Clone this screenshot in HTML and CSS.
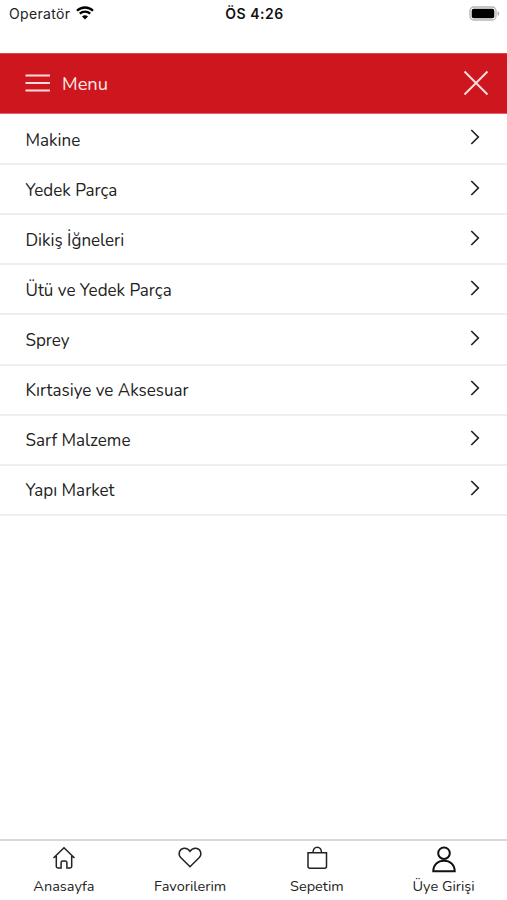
FILE: index.html
```
<!DOCTYPE html>
<html lang="tr">

<head>
    <meta charset="UTF-8">
    <meta name="viewport" content="width=device-width, initial-scale=1.0">
    <title>Menu</title>
    <link rel="stylesheet" href="styles.css">
</head>

<body>
    <div class="status-bar">
        <div class="carrier">
            <span>Operatör</span>
            <svg class="wifi" width="18" height="14" viewBox="0 0 18 14">
                <path d="M1 4.8C5.5.4 12.5.4 17 4.8M3.8 7.7c3-2.8 7.4-2.8 10.4 0" fill="none" stroke="#000" stroke-width="2.3"/>
                <path d="M9 13.6l-3-3.1c1.7-1.6 4.3-1.6 6 0z"/>
            </svg>
        </div>
        <div class="time">ÖS 4:26</div>
        <svg class="battery" width="31" height="15" viewBox="0 0 31 15">
            <rect x="1" y="1" width="26" height="13" rx="3.8" fill="#fff" stroke="#b5b5b5" stroke-width="1.3"/>
            <rect x="2.7" y="2.7" width="22.6" height="9.6" rx="2"/>
            <path d="M28.6 5.2c2.1.6 2.1 4 0 4.6z" fill="#aaa"/>
        </svg>
    </div>

    <header class="menu-header">
        <svg class="burger" width="26" height="18" viewBox="0 0 26 18">
            <path d="M.5 1.4h24.5M.5 9h24.5M.5 16.6h24.5"/>
        </svg>
        <h1>Menu</h1>
        <svg class="close" width="26" height="26" viewBox="0 0 26 26">
            <path d="M1.5 1.5l23 23M24.5 1.5l-23 23"/>
        </svg>
    </header>

    <ul class="menu-list">
        <li><span>Makine</span><svg width="10" height="16" viewBox="0 0 10 16"><path d="M1.3 1l7 7-7 7"/></svg></li>
        <li><span>Yedek Parça</span><svg width="10" height="16" viewBox="0 0 10 16"><path d="M1.3 1l7 7-7 7"/></svg></li>
        <li><span>Dikiş İğneleri</span><svg width="10" height="16" viewBox="0 0 10 16"><path d="M1.3 1l7 7-7 7"/></svg></li>
        <li><span>Ütü ve Yedek Parça</span><svg width="10" height="16" viewBox="0 0 10 16"><path d="M1.3 1l7 7-7 7"/></svg></li>
        <li><span>Sprey</span><svg width="10" height="16" viewBox="0 0 10 16"><path d="M1.3 1l7 7-7 7"/></svg></li>
        <li><span>Kırtasiye ve Aksesuar</span><svg width="10" height="16" viewBox="0 0 10 16"><path d="M1.3 1l7 7-7 7"/></svg></li>
        <li><span>Sarf Malzeme</span><svg width="10" height="16" viewBox="0 0 10 16"><path d="M1.3 1l7 7-7 7"/></svg></li>
        <li><span>Yapı Market</span><svg width="10" height="16" viewBox="0 0 10 16"><path d="M1.3 1l7 7-7 7"/></svg></li>
    </ul>

    <nav class="tab-bar">
        <a class="tab">
            <svg width="24" height="24" viewBox="0 0 24 24">
                <path d="M1.5 12L12 1.7 22.5 12M4.3 10v10.2a1.8 1.8 0 0 0 1.800 1.800h3v-5.500a1.500 1.500 0 0 1 1.500-1.500h2.800a1.500 1.500 0 0 1 1.500 1.500V22h3a1.800 1.800 0 0 0 1.800-1.800V10"/>
            </svg>
            <span>Anasayfa</span>
        </a>
        <a class="tab">
            <svg width="24" height="24" viewBox="0 0 24 24">
                <path d="M12 20.7L2.7 11.5C-.3 8 1.3 2.700 6 2.200c2.600-.2 4.800 1.200 6 3.200 1.200-2 3.400-3.400 6-3.200 4.700.5 6.300 5.800 3.300 9.300z"/>
            </svg>
            <span>Favorilerim</span>
        </a>
        <a class="tab">
            <svg width="24" height="24" viewBox="0 0 24 24">
                <path d="M3 6.8h18.500v13.400a2 2 0 0 1-2 2H5a2 2 0 0 1-2-2zM8 6.800c0-7.500 8.500-7.500 8.500 0"/>
            </svg>
            <span>Sepetim</span>
        </a>
        <a class="tab user">
            <svg width="24" height="26" viewBox="0 0 24 26">
                <circle cx="12" cy="7.2" r="5.8"/>
                <path d="M1.3 25.300C1.300 18.400 6 14.800 12 14.800S22.700 18.400 22.700 25.300z"/>
            </svg>
            <span>Üye Girişi</span>
        </a>
    </nav>
</body>

</html>
```
FILE: styles.css
```
* {
    box-sizing: border-box;
}

body {
    margin: 0;
    height: 900px;
    display: flex;
    flex-direction: column;
    background-color: #fff;
    color: #222;
    font-family: Nunito, Lato, sans-serif;
    overflow: hidden;
}

svg {
    flex: none;
}

/* phone status bar */
.status-bar {
    display: grid;
    grid-template-columns: 1fr auto 1fr;
    align-items: start;
    height: 53px;
    padding: 5px 7px 0 9px;
    font-family: Inter, sans-serif;
    font-size: 14px;
    line-height: 18px;
}

.carrier {
    display: flex;
    gap: 6px;
    letter-spacing: 0.32px;
}

.wifi {
    margin-top: 1px;
}

.time {
    color: #111;
    font-weight: 600;
    letter-spacing: 0.5px;
}

.battery {
    justify-self: end;
    margin-top: 1px;
}

/* red title bar */
.menu-header {
    display: flex;
    align-items: center;
    height: 61px;
    padding: 0 18px 0 25px;
    background-color: #ce161e;
    border-top: 1px solid #d9484f;
    border-bottom: 1px solid #df6268;
    color: #ffe9ea;
}

.menu-header h1 {
    flex: 1;
    margin: 0 0 0 11px;
    font-size: 18.3px;
    font-weight: 400;
    line-height: 24px;
}

.menu-header svg {
    margin-top: -1px;
    fill: none;
    stroke: #fbdcdd;
    stroke-width: 2;
}

/* categories */
.menu-list {
    flex: 1;
    margin: 0;
    padding: 0;
    list-style: none;
}

.menu-list li {
    display: flex;
    justify-content: space-between;
    height: 50.15px;
    padding: 14.55px 27px 0 25.5px;
    border-bottom: 2px solid #eee;
    font-size: 17px;
    line-height: 22px;
}

.menu-list li:first-child {
    height: 51px;
    padding-top: 16px;
}

.menu-list svg {
    fill: none;
    stroke: #222;
    stroke-width: 1.7;
}

.menu-list li:first-child svg {
    margin-top: -1px;
}

/* bottom navigation */
.tab-bar {
    display: grid;
    grid-template-columns: repeat(4, 1fr);
    height: 61px;
    border-top: 2px solid #d8d8d8;
}

.tab {
    display: flex;
    flex-direction: column;
    align-items: center;
    padding-top: 5px;
    font-size: 14.5px;
}

.tab:first-child {
    padding-left: 1px;
}

.tab svg {
    height: 24px;
    fill: none;
    stroke: #222;
    stroke-width: 1.5;
    overflow: visible;
}

.tab span {
    margin-top: 7px;
    line-height: 18px;
}

.tab.user svg {
    height: 26px;
    stroke: #111;
    stroke-width: 2;
}

.tab.user span {
    margin-top: 5px;
}
```
